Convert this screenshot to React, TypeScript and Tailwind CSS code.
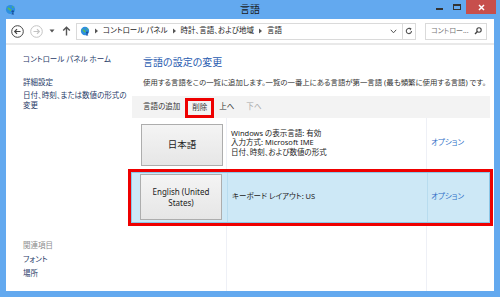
import React from "react";

// Windows 8 の「言語」コントロール パネル画面

function CpIcon({ size = 11 }: { size?: number }) {
  return (
    <svg width={size} height={size} viewBox="0 0 12 12">
      <circle cx="6" cy="6" r="5" fill="#2d8fe0" />
      <path d="M2.5 4.5 Q4 3 5 4.5 T7 6 L6 8 Z" fill="#5cc04a" />
      <path d="M7.5 2 L9.5 3.5 L8.5 5 Z" fill="#5cc04a" />
      <circle cx="8.5" cy="8" r="1.3" fill="#1a4f9c" />
      <path d="M7 11.5 L8.5 9 L10 11.5 Z" fill="#1a4f9c" />
    </svg>
  );
}

function Sep() {
  return (
    <svg width="5" height="6" viewBox="0 0 5 6" className="mx-[4px] shrink-0">
      <path d="M1 0.5 L4 3 L1 5.5 Z" fill="#555" />
    </svg>
  );
}

function NavBar() {
  return (
    <div className="flex h-[24px] items-center pl-[5px] pr-[7px]">
      <svg width="13" height="13" viewBox="0 0 13 13">
        <circle cx="6.5" cy="6.5" r="5.8" fill="none" stroke="#444" strokeWidth="1" />
        <path d="M9.5 6.5 H3.8 M6 4.2 L3.7 6.5 L6 8.8" fill="none" stroke="#444" strokeWidth="1.2" />
      </svg>
      <svg width="13" height="13" viewBox="0 0 13 13" className="ml-[6px]">
        <circle cx="6.5" cy="6.5" r="5.8" fill="none" stroke="#c4c4c4" strokeWidth="1" />
        <path d="M3.5 6.5 H9.2 M7 4.2 L9.3 6.5 L7 8.8" fill="none" stroke="#c4c4c4" strokeWidth="1.2" />
      </svg>
      <svg width="6" height="4" viewBox="0 0 6 4" className="ml-[6px]">
        <path d="M0.5 0.5 H5.5 L3 3.5 Z" fill="#555" />
      </svg>
      <svg width="9" height="10" viewBox="0 0 9 10" className="ml-[7px]">
        <path d="M4.5 9.5 V1.5 M1.2 4.6 L4.5 1.2 L7.8 4.6" fill="none" stroke="#555" strokeWidth="1.4" />
      </svg>
      <div className="ml-[5px] flex h-[17px] w-[340px] items-center border border-[#dadada] text-[7.5px] text-[#222]">
        <div className="flex flex-1 items-center pl-[3px]">
          <CpIcon size={10} />
          <Sep />
          <span>コントロール パネル</span>
          <Sep />
          <span>時計、言語、および地域</span>
          <Sep />
          <span>言語</span>
        </div>
        <svg width="7" height="5" viewBox="0 0 7 5" className="mr-[5px]">
          <path d="M0.8 0.8 L3.5 3.8 L6.2 0.8" fill="none" stroke="#555" strokeWidth="1" />
        </svg>
        <div className="flex h-full w-[13px] items-center justify-center border-l border-[#dadada]">
          <svg width="8" height="8" viewBox="0 0 8 8">
            <path d="M6.5 4 A2.6 2.6 0 1 1 5.4 1.9" fill="none" stroke="#555" strokeWidth="1.1" />
            <path d="M4.4 0.6 L6.6 1.6 L5.2 3.4 Z" fill="#555" />
          </svg>
        </div>
      </div>
      <div className="ml-auto flex h-[17px] w-[62px] items-center border border-[#dadada] pl-[5px] pr-[4px] text-[7px] text-[#777]">
        <span className="flex-1">コントロー...</span>
        <svg width="8" height="8" viewBox="0 0 8 8">
          <circle cx="5" cy="3" r="2.2" fill="none" stroke="#444" strokeWidth="1.1" />
          <path d="M3.4 4.6 L1 7" stroke="#444" strokeWidth="1.4" />
        </svg>
      </div>
    </div>
  );
}

function LangButton({ children, h }: { children: React.ReactNode; h: string }) {
  return (
    <div
      className={`flex w-[82px] flex-col items-center justify-center border border-[#adadad] bg-linear-to-b from-[#f4f4f4] to-[#e6e6e6] ${h}`}
    >
      {children}
    </div>
  );
}

export default function App() {
  return (
    <div className="flex h-[297px] w-[500px] flex-col overflow-hidden bg-[#63a9ef] font-['Noto_Sans','Noto_Sans_CJK_JP',sans-serif] [font-feature-settings:'palt']">
      {/* タイトル バー */}
      <div className="grid h-[19px] shrink-0 grid-cols-[1fr_auto_1fr]">
        <div className="flex h-full items-center pl-[5px]">
          <CpIcon size={11} />
        </div>
        <div className="flex h-full items-center text-[10px] text-[#1b1b1b]">言語</div>
        <div className="flex items-start justify-end pr-[4px]">
          <div className="flex h-[14px] w-[18px] items-end justify-center pb-[4px]">
            <div className="h-[2px] w-[7px] bg-[#333]" />
          </div>
          <div className="flex h-[14px] w-[18px] items-center justify-center">
            <div className="h-[6px] w-[8px] border border-t-2 border-[#333]" />
          </div>
          <div className="flex h-[14px] w-[30px] items-center justify-center bg-[#c74f4c]">
            <svg width="7" height="7" viewBox="0 0 7 7">
              <path d="M1 1 L6 6 M6 1 L1 6" stroke="#fff" strokeWidth="1.5" />
            </svg>
          </div>
        </div>
      </div>

      {/* クライアント領域 */}
      <div className="mx-[6px] mb-[6px] flex flex-1 flex-col bg-white">
        <NavBar />
        <div className="h-[2px] bg-[#e9e9e9]" />

        <div className="flex flex-1">
          {/* 左ペイン */}
          <div className="flex w-[126px] flex-col pb-[13px] pl-[17px] pt-[10px] text-[7.5px] leading-[9.5px] text-[#1f3a68]">
            <div>コントロール パネル ホーム</div>
            <div className="mt-[13px]">詳細設定</div>
            <div className="mt-[4px]">
              日付、時刻、または数値の形式の
              <br />
              変更
            </div>
            <div className="mt-auto text-[#8d8d8d]">関連項目</div>
            <div className="mt-[5px]">フォント</div>
            <div className="mt-[4px]">場所</div>
          </div>

          {/* メイン */}
          <div className="flex flex-1 flex-col pr-[4px] pt-[10px]">
            <div className="pl-[11px] text-[10px] leading-[14px] text-[#2a5cb0]">言語の設定の変更</div>
            <div className="mt-[9px] whitespace-nowrap pl-[11px] text-[7.4px] leading-[9.5px] text-[#333]">
              使用する言語をこの一覧に追加します。一覧の一番上にある言語が第一言語 (最も頻繁に使用する言語) です。
            </div>

            <div className="mt-[8px] flex h-[22px] items-center bg-[#f3f3f3] pl-[11px] text-[7.5px] text-[#333]">
              <span>言語の追加</span>
              <span className="ml-[5px] flex h-[20px] w-[29px] items-center justify-center self-end border-[3px] border-[#ee0000]">
                削除
              </span>
              <span className="ml-[5px]">上へ</span>
              <span className="ml-[12px] text-[#a8a8a8]">下へ</span>
            </div>

            {/* 言語一覧 */}
            <div className="flex flex-1 flex-col text-[7.5px] leading-[9.5px] text-[#222]">
              <div className="flex h-[51px]">
                <div className="w-[95px] border-r border-[#eef0f6] pl-[9px] pt-[6px]">
                  <LangButton h="h-[42px]">
                    <span className="text-[9.5px] text-[#222]">日本語</span>
                  </LangButton>
                </div>
                <div className="flex w-[200px] flex-col justify-center border-r border-[#eef0f6] pl-[4px]">
                  <div>Windows の表示言語: 有効</div>
                  <div>入力方式: Microsoft IME</div>
                  <div>日付、時刻、および数値の形式</div>
                </div>
                <div className="flex flex-1 items-center pl-[4px] text-[#2d6fc6]">オプション</div>
              </div>

              <div className="-ml-[4px] -mr-[3px] border-[3px] border-[#ee0000]">
                <div className="flex h-[51px] border border-[#8cc7e8] bg-[#cde8f6]">
                  <div className="w-[96px] border-r border-[#b8dcef] pl-[8px] pt-[1px]">
                    <LangButton h="h-[46px]">
                      <span className="text-[8px] leading-[11px] text-[#222]">English (United</span>
                      <span className="text-[8px] leading-[11px] text-[#222]">States)</span>
                    </LangButton>
                  </div>
                  <div className="flex w-[200px] items-center border-r border-[#b8dcef] pl-[4px]">
                    キーボード レイアウト: US
                  </div>
                  <div className="flex flex-1 items-center pl-[3px] text-[#2d6fc6]">オプション</div>
                </div>
              </div>

              <div className="flex flex-1">
                <div className="w-[95px] border-r border-[#eef0f6]" />
                <div className="w-[200px] border-r border-[#eef0f6]" />
                <div className="flex-1" />
              </div>
            </div>
          </div>
        </div>
      </div>
    </div>
  );
}
